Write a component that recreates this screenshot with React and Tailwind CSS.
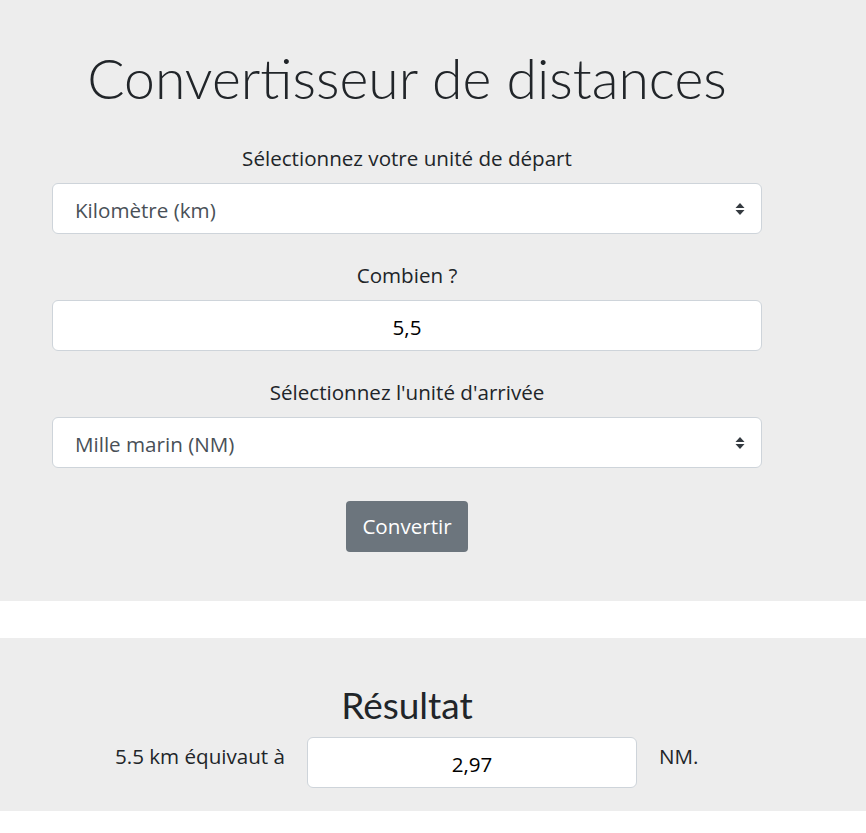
import React from 'react';

const BODY = { fontFamily: '"Open Sans", "Noto Sans", sans-serif' };
const TITLE = { fontFamily: 'Lato, "Noto Sans", sans-serif' };

function Arrows() {
  return (
    <svg width="10" height="14" viewBox="0 0 10 14" className="shrink-0">
      <path d="M5 1 L9.5 6 H0.5 Z" fill="#343a40" />
      <path d="M5 13 L9.5 8 H0.5 Z" fill="#343a40" />
    </svg>
  );
}

function FakeSelect({ value }) {
  return (
    <div className="h-[51px] bg-white border border-[#ced4da] rounded-[6px] flex items-center justify-between pl-[22px] pr-[16px] text-[20.6px] text-[#495057]">
      <span className="pt-[3px]">{value}</span>
      <Arrows />
    </div>
  );
}

function Label({ children }) {
  return <div className="text-center text-[20.6px] text-[#212529] leading-[24px]">{children}</div>;
}

export default function App() {
  return (
    <div style={BODY} className="min-h-[833px] bg-white">
      {/* form section */}
      <div className="bg-[#ededed] h-[601px] pt-[44px]">
        <div className="ml-[52px] w-[710px]">
          <h1 style={TITLE} className="text-center text-[55.3px] font-light leading-[67px] text-[#212529]">
            Convertisseur de distances
          </h1>
          <div className="mt-[35px]">
            <Label>Sélectionnez votre unité de départ</Label>
          </div>
          <div className="mt-[13px]">
            <FakeSelect value="Kilomètre (km)" />
          </div>
          <div className="mt-[29px]">
            <Label>Combien ?</Label>
          </div>
          <div className="mt-[13px] h-[51px] pt-[3px] bg-white border border-[#ced4da] rounded-[6px] flex items-center justify-center text-[20.6px] text-black">
            5,5
          </div>
          <div className="mt-[29px]">
            <Label>Sélectionnez l'unité d'arrivée</Label>
          </div>
          <div className="mt-[13px]">
            <FakeSelect value="Mille marin (NM)" />
          </div>
          <div className="mt-[33px] flex justify-center">
            <button className="h-[51px] px-[16px] bg-[#6c757d] text-white text-[20.6px] rounded-[4px]">
              Convertir
            </button>
          </div>
        </div>
      </div>

      {/* result section */}
      <div className="mt-[37px] bg-[#ededed] h-[173px] pt-[45px]">
        <div className="ml-[52px] w-[710px]">
          <h2 style={TITLE} className="text-center text-[37px] leading-[43px] text-[#212529]">Résultat</h2>
          <div className="flex items-start mt-[11px]">
            <div className="w-[255px] pr-[22px] text-right text-[20.6px] text-[#212529] pt-[4px]">5.5 km équivaut à</div>
            <div className="w-[330px] h-[51px] pt-[3px] bg-white border border-[#ced4da] rounded-[6px] flex items-center justify-center text-[20.6px] text-black">
              2,97
            </div>
            <div className="pl-[22px] text-[20.6px] text-[#212529] pt-[4px]">NM.</div>
          </div>
        </div>
      </div>
    </div>
  );
}
